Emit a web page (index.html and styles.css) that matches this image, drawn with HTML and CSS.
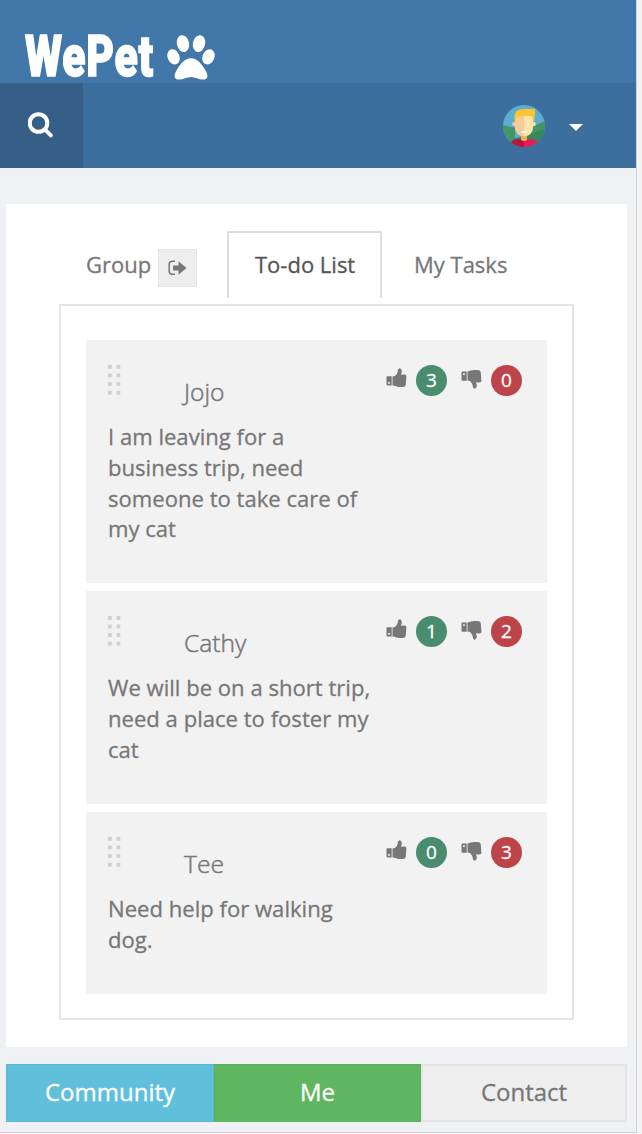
FILE: index.html
```
<!DOCTYPE html>
<html lang="en">
<head>
<meta charset="utf-8">
<title>WePet</title>
<link rel="stylesheet" href="styles.css">
</head>
<body>
<svg class="defs" aria-hidden="true">
  <symbol id="thumb" viewBox="0 0 20 20">
    <path fill-rule="evenodd" d="M.8 8.2h4.4v9.3H.8a.8.8 0 0 1-.8-.8V9a.8.8 0 0 1 .8-.8zM1.600 14v1.700h1.700v-1.700z"/>
    <path d="M6 8.500l2.300-.4c1.300-1 2.400-2.600 2.800-4.200C11.300 2.500 11.400.6 12.700.4c1.600-.3 2.600 1.300 2.600 3 0 1.400-.6 2.400-.9 3.300l3.600-.1c1.500 0 2 .8 1.900 2.200l-.6 7.500c-.1 1.700-1.200 2.700-2.900 2.700h-3.700c-2.500 0-3.900-1.100-6.700-1.400z"/>
  </symbol>
</svg>
<div class="app">
  <header class="brand">
    <svg class="wordmark" width="136" height="78" viewBox="0 0 136 78"><text x="2" y="70.500" textLength="129" lengthAdjust="spacingAndGlyphs">WePet</text></svg>
    <svg class="paw" width="48" height="45" viewBox="0 0 48 45">
      <ellipse cx="16" cy="8.600" rx="6.100" ry="8.500" transform="rotate(-12 16 8.600)"/>
      <ellipse cx="32" cy="8.600" rx="6.100" ry="8.500" transform="rotate(12 32 8.600)"/>
      <ellipse cx="6.500" cy="21.800" rx="5.900" ry="7.900" transform="rotate(-22 6.500 21.800)"/>
      <ellipse cx="41.500" cy="21.800" rx="5.900" ry="7.900" transform="rotate(22 41.500 21.800)"/>
      <path d="M24 23.300c5.500 0 9.500 4.300 13 9.700 1.900 2.800 3.500 5.600 3.400 8 0 2.700-2 3.600-4.500 3.600-4.300 0-7.700-2.600-11.900-2.600s-7.700 2.600-11.900 2.600c-2.500 0-4.500-.9-4.500-3.600 0-2.400 1.500-5.200 3.400-8 3.500-5.400 7.500-9.700 13-9.700z"/>
    </svg>
  </header>
  <nav class="toolbar">
    <div class="search">
      <svg width="26" height="26" viewBox="0 0 26 26"><circle cx="10.500" cy="11" r="8.800" /><path d="M17.200 17.700l5.600 5.600"/></svg>
    </div>
    <div class="account">
      <svg class="avatar" width="42" height="42" viewBox="0 0 42 42">
        <clipPath id="face"><circle cx="21" cy="21" r="21"/></clipPath>
        <g clip-path="url(#face)">
          <path fill="#5badd2" d="M0 0h42v42H0z"/>
          <path fill="#419866" d="M0 20l12 3v19H0z"/>
          <path fill="#419866" d="M29 22l13-6v26H22z"/>
          <path fill="#38875d" d="M10 34l19-6 13-4v18H7z"/>
          <path fill="#b91346" d="M8 37q3-3 9-3h4v8H8z"/>
          <path fill="#e71d59" d="M21 34h5q6 0 9 3v5H21z"/>
          <path fill="#f3a66d" d="M18 28h6v7h-6z"/>
          <path fill="#f6bd25" d="M18 33q3 3 6 0v2q-3 2-6 0z"/>
          <circle cx="11.500" cy="19" r="2.300" fill="#f6c794"/><circle cx="30.500" cy="19" r="2.300" fill="#ffdda5"/>
          <path fill="#f7cc98" d="M12 11h9v20.500c-5 0-9-4-9-9z"/>
          <path fill="#ffe2ab" d="M21 11h9v11.500c0 5-4 9-9 9z"/>
          <path fill="#fac52e" d="M12 17.500C9.500 7 15 4 20 4h12v6c-1 3 0 5-2 7.500 0-3 0-5-1-6-4-1-10 0-14 0-2 1.500-2 3.500-3 6z"/>
          <path fill="#fff" d="M18 26.300h6q-.5 2-3 2t-3-2z"/>
        </g>
      </svg>
      <span class="caret"></span>
    </div>
  </nav>
  <main class="panel">
    <div class="tabs">
      <div class="tab tab-group"><span>Group</span><span class="leave"><svg width="19" height="16" viewBox="0 0 19 16"><path class="bracket" d="M7 1.200H4.200Q1.200 1.200 1.200 4.200v7.100q0 3 3 3H7"/><path class="arrow" d="M5 5.400h5.500V1.300L18.500 8l-8 6.700v-4.300H5z"/></svg></span></div>
      <div class="tab tab-active">To-do List</div>
      <div class="tab tab-tasks">My Tasks</div>
    </div>
    <div class="list">
      <article class="card card-a">
        <div class="grip"></div>
        <div class="votes"><svg class="thumb"><use href="#thumb"/></svg><span class="badge up">3</span><svg class="thumb down"><use href="#thumb"/></svg><span class="badge no">0</span></div>
        <h2>Jojo</h2>
        <p>I am leaving for a<br>business trip, need<br>someone to take care of<br>my cat</p>
      </article>
      <article class="card card-b">
        <div class="grip"></div>
        <div class="votes"><svg class="thumb"><use href="#thumb"/></svg><span class="badge up">1</span><svg class="thumb down"><use href="#thumb"/></svg><span class="badge no">2</span></div>
        <h2>Cathy</h2>
        <p>We will be on a short trip,<br>need a place to foster my<br>cat</p>
      </article>
      <article class="card card-c">
        <div class="grip"></div>
        <div class="votes"><svg class="thumb"><use href="#thumb"/></svg><span class="badge up">0</span><svg class="thumb down"><use href="#thumb"/></svg><span class="badge no">3</span></div>
        <h2>Tee</h2>
        <p>Need help for walking<br>dog.</p>
      </article>
    </div>
  </main>
  <footer class="switcher">
    <div class="community">Community</div>
    <div class="me">Me</div>
    <div class="contact">Contact</div>
  </footer>
</div>
</body>
</html>
```
FILE: styles.css
```
* { box-sizing: border-box; }
body {
  margin: 0;
  background: #f4f4f4;
  font-family: "Open Sans", "Noto Sans", sans-serif;
  font-size: 22px;
  color: #777;
  -webkit-text-stroke: 0.3px currentColor;
}
svg { display: block; flex: none; }
.defs { display: none; }
.app {
  width: 637px;
  height: 1133px;
  background: #eff1f5;
  border-right: 1px solid #d0d2d7;
  border-bottom: 1px solid #d0d2d7;
}
.brand {
  height: 83px;
  background: #4277aa;
  display: flex;
  align-items: flex-start;
  gap: 8px;
  padding: 5px 0 0 23px;
}
.wordmark { overflow: visible; }
.wordmark text {
  font: 900 58px Roboto, sans-serif;
  letter-spacing: 1px;
  fill: #fff;
  stroke: #fff;
  stroke-width: 1.500px;
  -webkit-text-stroke: 1.500px #fff;
}
.paw { fill: #fff; margin-top: 30px; }
.toolbar {
  height: 85px;
  background: #3d6f9e;
  display: flex;
  justify-content: space-between;
}
.search { width: 83px; background: #355f87; padding: 29px 0 0 28px; }
.search svg { fill: none; stroke: #fff; stroke-width: 4; stroke-linecap: round; }
.account { display: flex; gap: 24px; padding: 22px 53px 0 0; }
.caret {
  width: 14px;
  height: 7px;
  margin-top: 19px;
  background: #fff;
  clip-path: polygon(0 0, 100% 0, 50% 100%);
}
.panel {
  width: 621px;
  height: 843px;
  margin: 36px 0 0 6px;
  background: #fff;
  padding: 27px 53px 0;
}
.tabs { height: 73px; display: flex; line-height: 30px; }
.tab { padding-top: 18px; white-space: nowrap; }
.tab-group { width: 168px; padding-left: 27px; display: flex; gap: 7px; }
.leave {
  width: 39px;
  height: 38px;
  background: #eee;
  border: 1px solid #e4e4e4;
  display: grid;
  place-items: center;
}
.leave .bracket { fill: none; stroke: #777; stroke-width: 1.500; }
.leave .arrow { fill: #777; }
.tab-active {
  width: 155px;
  height: 67px;
  border: solid #ddd;
  border-width: 2px 2px 0;
  padding: 16px 0 0 26px;
  color: #555;
}
.tab-tasks { padding-left: 32px; }
.list {
  width: 515px;
  height: 716px;
  border: 2px solid #e5e5e5;
  padding: 34px 25px 24px;
  display: flex;
  flex-direction: column;
  gap: 8px;
}
.card {
  flex: none;
  background: #f2f2f2;
  display: grid;
  grid-template-columns: 98px 202px 1fr;
  grid-template-rows: 80px auto;
  align-content: start;
}
.card-a { height: 243px; }
.card-b { height: 213px; }
.card-c { height: 182px; }
.grip {
  width: 14px;
  height: 31px;
  margin: 25px 0 0 22px;
  background: conic-gradient(from 0deg at 4px 4px, transparent 270deg, #d0d0d0 0) 0 0 / 8.500px 8.600px;
}
.card h2 {
  grid-area: 1 / 2;
  margin: 34px 0 0;
  font-size: 24.600px;
  line-height: 36px;
  font-weight: 300;
  -webkit-text-stroke-width: 0.5px;
}
.votes { grid-area: 1 / 3; display: flex; padding-top: 25px; }
.thumb { width: 21px; height: 20px; margin-top: 3px; fill: #777; }
.thumb.down { margin: 4px 0 0 14px; transform: scaleY(-1); }
.badge {
  width: 31px;
  height: 31px;
  margin-left: 9px;
  border-radius: 50%;
  color: #fff;
  font-size: 19px;
  line-height: 31px;
  text-align: center;
}
.badge.up { background: #4a8c6e; }
.badge.no { background: #bd4448; }
.card p {
  grid-area: 2 / 1 / 3 / 4;
  margin: 1px 0 0 22px;
  font-size: 22.100px;
  line-height: 30.800px;
}
.switcher {
  width: 621px;
  height: 58px;
  margin: 17px 0 0 6px;
  display: grid;
  grid-template-columns: 208px 207px 206px;
  font-size: 24px;
  line-height: 54px;
  text-align: center;
  color: #fff;
}
.switcher .community { background: #60bfdb; border: 1px solid #58b9d7; }
.switcher .me { background: #5fb560; border: 1px solid #5ab35b; }
.switcher .contact { background: #eee; border: 2px solid #e4e4e4; color: #777; line-height: 52px; }
```
